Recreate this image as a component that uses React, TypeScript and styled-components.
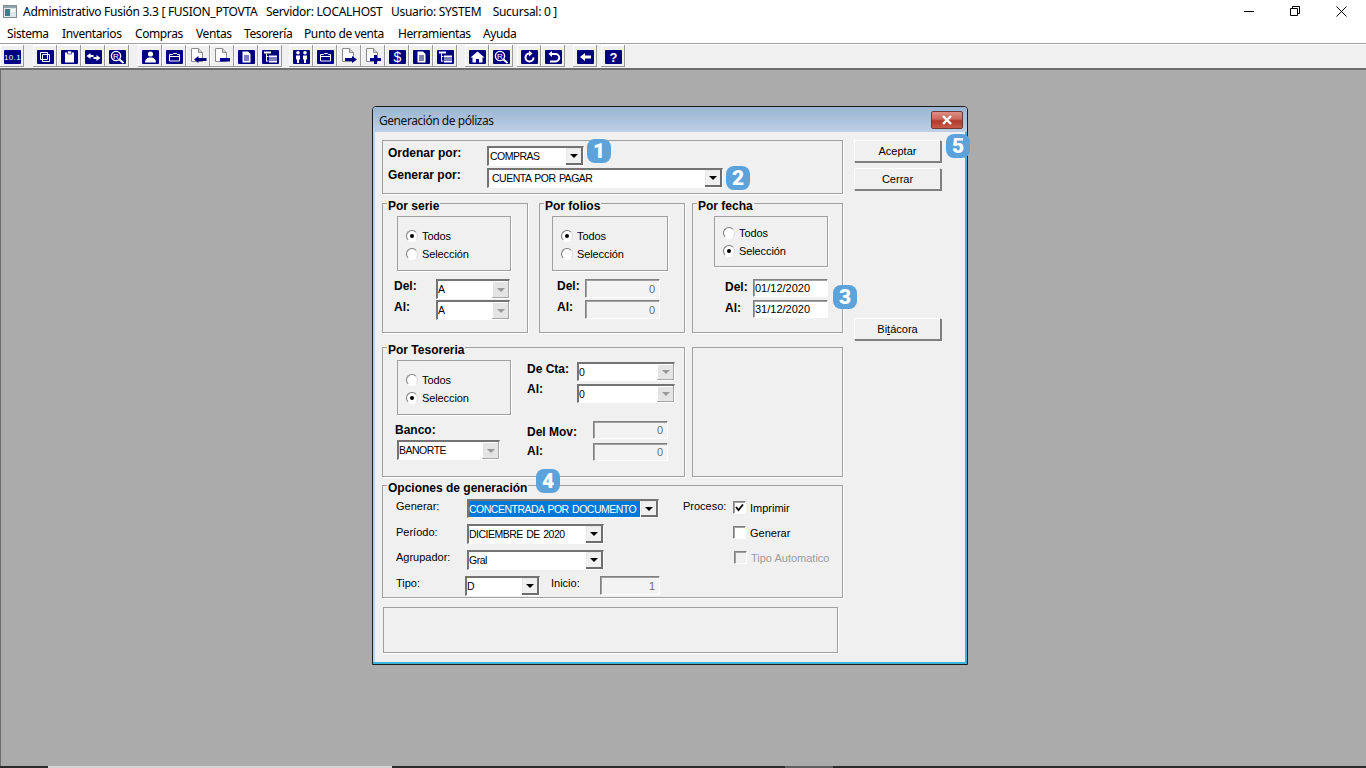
import React from 'react';
import styled, { createGlobalStyle } from 'styled-components';

const GlobalStyle = createGlobalStyle`
  html, body {
    margin: 0;
    height: 100%;
    overflow: hidden;
  }
  body {
    font-family: "Liberation Sans", Arial, sans-serif;
    font-size: 11px;
    color: #000;
  }
  #root {
    height: 100%;
  }
`;

const Screen = styled.div`
  display: flex;
  flex-direction: column;
  height: 768px;
  background: #fff;
`;

const TitleBar = styled.div`
  display: flex;
  align-items: center;
  height: 22px;
  padding-left: 3px;
  font-family: "Noto Sans", sans-serif;
  font-size: 12px;
  color: #000;
`;

const TitleText = styled.span`
  margin-left: 6px;
  white-space: pre;
  letter-spacing: -0.28px;
`;

const WindowControls = styled.div`
  display: flex;
  margin-left: auto;
  margin-right: 2px;
`;

const WindowButton = styled.div`
  display: flex;
  align-items: center;
  justify-content: center;
  width: 46px;
  height: 20px;
`;

const MenuBar = styled.div`
  display: flex;
  align-items: center;
  height: 22px;
  padding: 2px 0 0 7px;
  box-sizing: border-box;
  border-bottom: 1px solid #a0a0a0;
  font-family: "Noto Sans", sans-serif;
  font-size: 12px;
  letter-spacing: -0.4px;
`;

const MenuItem = styled.span<{ $w: number }>`
  width: ${p => p.$w}px;
`;

const Toolbar = styled.div`
  display: flex;
  height: 26px;
  box-sizing: border-box;
  background: #f0f0f0;
  border-top: 1px solid #fff;
  border-bottom: 2px solid #6d6d6d;
`;

const ToolGroup = styled.div<{ $gap: number }>`
  display: flex;
  margin-left: ${p => p.$gap}px;
`;

const ToolButton = styled.div`
  display: flex;
  justify-content: center;
  align-items: flex-end;
  width: 24px;
  height: 22px;
  padding-bottom: 3px;
  box-sizing: border-box;
  box-shadow: inset -1px -1px 0 #9a9a9a, inset 1px 1px 0 #fff;
`;

const Desktop = styled.div`
  flex: 1;
  padding: 36px 0 0 371px;
  background: #ababab;
  border-left: 1px solid #6d6d6d;
  box-sizing: border-box;
`;

const TaskStrip = styled.div`
  display: flex;
  height: 2px;
  background: #2b2b2b;
`;

const TaskItem = styled.div<{ $left: number; $w: number; $c: string }>`
  margin-left: ${p => p.$left}px;
  width: ${p => p.$w}px;
  background: ${p => p.$c};
`;

const Dialog = styled.div`
  position: relative;
  display: flex;
  flex-direction: column;
  width: 596px;
  height: 559px;
  box-sizing: border-box;
  border: 1px solid #1c1c1c;
  border-radius: 4px 4px 0 0;
  background: #b9d1ea;
  box-shadow: inset -2px -2px 0 #3cb4dc;
`;

const DialogTitle = styled.div`
  display: flex;
  align-items: center;
  justify-content: space-between;
  height: 25px;
  flex: none;
  padding: 0 4px 0 6px;
  background: linear-gradient(#99b4d1, #bfd0e6);
  border-radius: 3px 3px 0 0;
  font-family: "Noto Sans", sans-serif;
  font-size: 12px;
  letter-spacing: -0.45px;
  color: #111;
`;

const DialogCaption = styled.span`
  padding-top: 2px;
`;

const CloseBox = styled.div`
  display: flex;
  align-items: center;
  justify-content: center;
  width: 32px;
  height: 18px;
  box-sizing: border-box;
  border: 1px solid #6e3a36;
  border-radius: 2px;
  background: linear-gradient(#dc8f82 0%, #c9675a 45%, #b13a2a 55%, #c65a48 100%);
`;

const DialogBody = styled.div`
  display: flex;
  gap: 11px;
  flex: 1;
  margin: 0 2px 2px;
  padding: 8px 0 0 7px;
  background: #f0f0f0;
`;

const LeftColumn = styled.div`
  display: flex;
  flex-direction: column;
  width: 461px;
`;

const RightColumn = styled.div`
  display: flex;
  flex-direction: column;
  gap: 6px;
  width: 88px;
`;

const ActionButton = styled.div<{ $top?: number }>`
  display: flex;
  align-items: center;
  justify-content: center;
  height: 22px;
  width: 87px;
  box-sizing: border-box;
  margin-top: ${p => p.$top ?? 0}px;
  background: #f0f0f0;
  border: 1px solid;
  border-color: #fff #808080 #808080 #fff;
  box-shadow: 1px 1px 0 #808080;
`;

const Panel = styled.div<{ $w?: number; $h: number; $mt?: number; $ml?: number }>`
  position: relative;
  width: ${p => (p.$w ? `${p.$w}px` : 'auto')};
  height: ${p => p.$h}px;
  margin-top: ${p => p.$mt ?? 0}px;
  margin-left: ${p => p.$ml ?? 0}px;
  box-sizing: border-box;
  flex: none;
  border: 1px solid #a0a0a0;
  box-shadow: 1px 1px 0 #fff;
`;

const TopPanel = styled(Panel)`
  display: flex;
  flex-direction: column;
  gap: 2px;
  padding: 5px 0 0 5px;
`;

const GroupRow = styled.div<{ $mt: number }>`
  display: flex;
  gap: 7px;
  margin-top: ${p => p.$mt}px;
`;

const Group = styled(Panel)<{ $pl?: number }>`
  display: flex;
  flex-direction: column;
  padding: 12px 0 0 ${p => p.$pl ?? 14}px;
`;

const Legend = styled.span`
  position: absolute;
  top: -5px;
  left: 4px;
  padding: 0 1px;
  background: #f0f0f0;
  font-size: 12px;
  font-weight: bold;
  line-height: 14px;
  white-space: nowrap;
`;

const RadioBox = styled.div<{ $w: number; $h: number; $top: number; $ml?: number }>`
  display: flex;
  flex-direction: column;
  width: ${p => p.$w}px;
  height: ${p => p.$h}px;
  margin-left: ${p => p.$ml ?? 0}px;
  padding: ${p => p.$top}px 0 0 8px;
  box-sizing: border-box;
  flex: none;
  border: 1px solid #a0a0a0;
  box-shadow: 1px 1px 0 #fff;
`;

const RadioRow = styled.div`
  display: flex;
  align-items: center;
  gap: 4px;
  height: 18px;
  letter-spacing: -0.1px;
`;

const RadioDot = styled.span<{ $on?: boolean }>`
  display: flex;
  align-items: center;
  justify-content: center;
  width: 12px;
  height: 12px;
  box-sizing: border-box;
  border-radius: 50%;
  border: 1px solid;
  border-color: #7a7a7a #dcdcdc #fff #7a7a7a;
  background: #fff;

  &::after {
    content: '';
    width: 4px;
    height: 4px;
    border-radius: 50%;
    background: ${p => (p.$on ? '#000' : 'transparent')};
  }
`;

const Fields = styled.div<{ $mt?: number; $ml?: number; $gap?: number }>`
  display: flex;
  flex-direction: column;
  gap: ${p => p.$gap ?? 1}px;
  margin-top: ${p => p.$mt ?? 0}px;
  margin-left: ${p => p.$ml ?? 0}px;
`;

const FieldRow = styled.div<{ $mt?: number }>`
  display: flex;
  align-items: flex-start;
  margin-top: ${p => p.$mt ?? 0}px;
`;

const BoldLabel = styled.span<{ $w: number; $top?: number; $ml?: number }>`
  width: ${p => p.$w}px;
  flex: none;
  margin-top: ${p => p.$top ?? 0}px;
  margin-left: ${p => p.$ml ?? 0}px;
  font-size: 12px;
  font-weight: bold;
  line-height: 14px;
  white-space: nowrap;
`;

const PlainLabel = styled.span<{ $w: number; $ml?: number; $top?: number }>`
  width: ${p => p.$w}px;
  flex: none;
  margin-left: ${p => p.$ml ?? 0}px;
  margin-top: ${p => p.$top ?? 0}px;
  line-height: 14px;
  white-space: nowrap;
`;

const Combo = styled.div<{ $w: number; $h?: number }>`
  display: flex;
  width: ${p => p.$w}px;
  height: ${p => p.$h ?? 20}px;
  flex: none;
  box-sizing: border-box;
  background: #fff;
  border: solid;
  border-width: 2px 1px 1px 2px;
  border-color: #747474 #fff #fff #747474;
`;

const ComboText = styled.span<{ $pad?: number; $selected?: boolean }>`
  flex: 1;
  display: flex;
  align-items: center;
  padding-left: ${p => p.$pad ?? 0}px;
  padding-bottom: 1px;
  white-space: pre;
  font-size: 10.5px;
  letter-spacing: -0.5px;
  word-spacing: 1px;
  background: ${p => (p.$selected ? '#0078d7' : 'transparent')};
  color: ${p => (p.$selected ? '#fff' : '#000')};
  margin-right: ${p => (p.$selected ? 1 : 0)}px;
`;

const ComboArrow = styled.span<{ $off?: boolean }>`
  display: flex;
  align-items: center;
  justify-content: center;
  width: 17px;
  flex: none;
  background: ${p => (p.$off ? '#e4e4e4' : '#f0f0f0')};
  box-shadow: ${p =>
    p.$off
      ? 'inset -1px -1px 0 #a6a6a6, inset 1px 1px 0 #fff'
      : 'inset -2px -2px 0 #6e6e6e, inset 1px 1px 0 #e8e8e8'};

  &::after {
    content: '';
    border-style: solid;
    border-width: 4px 4px 0;
    border-color: ${p => (p.$off ? '#9a9a9a' : '#000')} transparent transparent;
    margin: 0 ${p => (p.$off ? 0 : 1)}px ${p => (p.$off ? 0 : 1)}px 0;
  }
`;

const TextBox = styled.div<{ $w: number; $h?: number; $off?: boolean }>`
  display: flex;
  align-items: center;
  justify-content: ${p => (p.$off ? 'flex-end' : 'flex-start')};
  width: ${p => p.$w}px;
  height: ${p => p.$h ?? 19}px;
  flex: none;
  box-sizing: border-box;
  padding: 0 4px 0 1px;
  background: ${p => (p.$off ? '#f3f3f3' : '#fff')};
  color: ${p => (p.$off ? '#6d6d6d' : '#000')};
  border: 1px solid;
  border-color: #808080 #fff #fff #808080;
  box-shadow: inset 1px 1px 0 #a0a0a0;
`;

const Columns = styled.div<{ $gap: number }>`
  display: flex;
  gap: ${p => p.$gap}px;
`;

const OptionsGroup = styled(Panel)`
  display: flex;
  padding: 13px 0 0 13px;
`;

const CheckColumn = styled.div`
  display: flex;
  flex-direction: column;
  margin: -4px 0 0 23px;
`;

const CheckRow = styled.div<{ $off?: boolean }>`
  display: flex;
  align-items: center;
  gap: 4px;
  height: 25px;
  padding-left: ${p => (p.$off ? 1 : 0)}px;
  color: ${p => (p.$off ? '#9c9c9c' : '#000')};
`;

const CheckBox = styled.span<{ $off?: boolean }>`
  display: flex;
  align-items: center;
  justify-content: center;
  width: 13px;
  height: 13px;
  box-sizing: border-box;
  background: ${p => (p.$off ? '#f0f0f0' : '#fff')};
  border: 1px solid;
  border-color: #808080 #fff #fff #808080;
  box-shadow: inset 1px 1px 0 #a0a0a0;
`;

const Badge = styled.span<{ $x: number; $y: number }>`
  position: absolute;
  left: ${p => p.$x}px;
  top: ${p => p.$y}px;
  display: flex;
  align-items: center;
  justify-content: center;
  width: 24px;
  height: 24px;
  border-radius: 8px;
  background: #5ba3da;
  color: #fff;
  font-family: "Roboto", sans-serif;
  font-size: 21px;
  font-weight: 900;
  line-height: 1;
`;

const navy = '#000080';

const NavyIcon = ({ children }: { children: React.ReactNode }) => (
  <svg width="17" height="14" viewBox="0 0 17 14">
    <rect width="17" height="14" rx="1" fill={navy} />
    {children}
  </svg>
);

// white page with a folded corner, the arrow or sign is drawn over it
const DocIcon = ({ children }: { children: React.ReactNode }) => (
  <svg width="17" height="16" viewBox="0 0 17 16">
    <path d="M1.5 0.5h7l4 4v9h-11z" fill="#fff" stroke="#8c8c8c" />
    <path d="M8.5 0.5v4h4" fill="#d0d0d0" stroke="#8c8c8c" />
    {children}
  </svg>
);

const magnifier = (
  <NavyIcon>
    <circle cx="7" cy="6" r="4.6" fill={navy} stroke="#fff" strokeWidth="1.4" />
    <text x="7" y="9" fontSize="8" fontFamily="Liberation Sans" fill="#fff" textAnchor="middle">R</text>
    <path d="M10.5 9.5l4 3.5" stroke="#fff" strokeWidth="2" />
  </NavyIcon>
);

const pageLines = (
  <NavyIcon>
    <path d="M4.5 1.5h5.5l2.5 2.5v8.5h-8z" fill="#fff" />
    <path d="M6 6h5M6 8h5M6 10h5" stroke={navy} strokeWidth="1" />
  </NavyIcon>
);

const treeList = (
  <NavyIcon>
    <path d="M2 1.5h7v2H2z" fill="#fff" />
    <path d="M4.5 3.5v8M4.5 6.5h2M4.5 11h2" stroke="#fff" strokeWidth="1" />
    <path d="M7 5.5h8v2H7zM7 8.5h8v1H7zM7 10.5h8v2H7z" fill="#fff" />
  </NavyIcon>
);

const folder = (
  <NavyIcon>
    <path d="M3.5 11V4.5h3l1-1h3l1 1h2V11z" fill="none" stroke="#fff" strokeWidth="1" />
    <path d="M3.5 6.5h10" stroke="#fff" strokeWidth="1" />
  </NavyIcon>
);

const icons: Record<string, React.ReactNode> = {
  number: (
    <NavyIcon>
      <text x="8.5" y="10" fontSize="8" fontFamily="Liberation Sans" fill="#fff" textAnchor="middle" letterSpacing="0.4">10.1</text>
    </NavyIcon>
  ),
  copy: (
    <NavyIcon>
      <path d="M3.5 2.5h7v2h2v7h-7v-2h-2z" fill="none" stroke="#fff" strokeWidth="1" />
      <path d="M5.5 4.5h5v5h-5z" fill="none" stroke="#fff" strokeWidth="1" />
    </NavyIcon>
  ),
  clipboard: (
    <NavyIcon>
      <path d="M4 2.5h9v10H4z" fill="#fff" />
      <path d="M6.5 1h4v3h-4z" fill="#fff" stroke={navy} strokeWidth="0.6" />
    </NavyIcon>
  ),
  swap: (
    <NavyIcon>
      <path d="M1.5 6l4-3v2h3v2h-3v2z" fill="#fff" />
      <path d="M15.5 8l-4-3v2h-3v2h3v2z" fill="#fff" />
    </NavyIcon>
  ),
  search: magnifier,
  person: (
    <NavyIcon>
      <circle cx="8.5" cy="4" r="2.6" fill="#fff" />
      <path d="M3 12.5c0-3 2-5 5.5-5s5.5 2 5.5 5z" fill="#fff" />
    </NavyIcon>
  ),
  folder,
  docIn: (
    <DocIcon>
      <path d="M4 11.5l4.5-3.5v2h8v3h-8v2z" fill={navy} />
    </DocIcon>
  ),
  docOut: (
    <DocIcon>
      <path d="M6 10h10v3.5H6z" fill={navy} />
    </DocIcon>
  ),
  page: pageLines,
  tree: treeList,
  people: (
    <NavyIcon>
      <circle cx="5" cy="2.8" r="1.8" fill="#fff" />
      <path d="M3 5.5h4v4H6V13H4V9.500H3z" fill="#fff" />
      <circle cx="12" cy="2.8" r="1.8" fill="#fff" />
      <path d="M10 5.5h4v4h-1V13h-2V9.500h-1z" fill="#fff" />
    </NavyIcon>
  ),
  docRight: (
    <DocIcon>
      <path d="M4 10h7V8l5 3.5-5 3.5v-2H4z" fill={navy} />
    </DocIcon>
  ),
  docPlus: (
    <DocIcon>
      <path d="M9 7h3v3h4v3h-4v3H9v-3H5v-3h4z" fill={navy} />
    </DocIcon>
  ),
  dollar: (
    <NavyIcon>
      <text x="8.5" y="12.3" fontSize="14" fontFamily="Liberation Sans" fill="#fff" textAnchor="middle">$</text>
    </NavyIcon>
  ),
  home: (
    <NavyIcon>
      <path d="M8.5 1.5l7 6h-2v5H10V9H7v3.5H3.5v-5h-2z" fill="#fff" />
    </NavyIcon>
  ),
  redo: (
    <NavyIcon>
      <path d="M8.5 3.5A4 4 0 1 0 12.5 7.5" fill="none" stroke="#fff" strokeWidth="2" />
      <path d="M8 0.5v6l3.5-3z" fill="#fff" />
    </NavyIcon>
  ),
  undo: (
    <NavyIcon>
      <path d="M5.5 4h5a2.8 2.8 0 0 1 0 7.5H5" fill="none" stroke="#fff" strokeWidth="2" />
      <path d="M7 1v6L3.5 4z" fill="#fff" />
    </NavyIcon>
  ),
  back: (
    <NavyIcon>
      <path d="M3 7l5-4v2.500h6v3H8V11z" fill="#fff" />
    </NavyIcon>
  ),
  help: (
    <NavyIcon>
      <text x="8.5" y="11.8" fontSize="13" fontWeight="bold" fontFamily="Liberation Sans" fill="#fff" textAnchor="middle">?</text>
    </NavyIcon>
  ),
};

const toolGroups = [
  { gap: 0, items: ['number'] },
  { gap: 9, items: ['copy', 'clipboard', 'swap', 'search'] },
  { gap: 9, items: ['person', 'folder', 'docIn', 'docOut', 'page', 'tree'] },
  { gap: 7, items: ['people', 'folder', 'docRight', 'docPlus', 'dollar', 'page', 'tree'] },
  { gap: 8, items: ['home', 'search'] },
  { gap: 4, items: ['redo', 'undo'] },
  { gap: 8, items: ['back'] },
  { gap: 4, items: ['help'] },
];

const menus: [string, number][] = [
  ['Sistema', 55],
  ['Inventarios', 73],
  ['Compras', 61],
  ['Ventas', 48],
  ['Tesorería', 60],
  ['Punto de venta', 94],
  ['Herramientas', 85],
  ['Ayuda', 50],
];

const Radio = ({ label, on }: { label: string; on?: boolean }) => (
  <RadioRow>
    <RadioDot $on={on} />
    {label}
  </RadioRow>
);

const Select = ({
  w,
  h,
  text,
  pad,
  off,
  selected,
}: {
  w: number;
  h?: number;
  text: string;
  pad?: number;
  off?: boolean;
  selected?: boolean;
}) => (
  <Combo $w={w} $h={h}>
    <ComboText $pad={pad} $selected={selected}>{text}</ComboText>
    <ComboArrow $off={off} />
  </Combo>
);

export default function App() {
  return (
    <>
      <GlobalStyle />
      <Screen>
        <TitleBar>
          <svg width="14" height="13" viewBox="0 0 14 13">
            <rect x="0.5" y="0.5" width="13" height="12" fill="#dfe6e6" stroke="#7f8f8f" />
            <rect x="1" y="1" width="12" height="2" fill="#8fa3a8" />
            <rect x="2" y="4" width="5" height="7" fill="#3f7f88" />
            <rect x="8" y="4" width="4" height="3" fill="#ffffff" />
          </svg>
          <TitleText>{'Administrativo Fusión 3.3 [ FUSION_PTOVTA   Servidor: LOCALHOST   Usuario: SYSTEM    Sucursal: 0 ]'}</TitleText>
          <WindowControls>
            <WindowButton>
              <svg width="10" height="10" viewBox="0 0 10 10">
                <path d="M0 5.5h10" stroke="#000" strokeWidth="1" />
              </svg>
            </WindowButton>
            <WindowButton>
              <svg width="10" height="10" viewBox="0 0 10 10">
                <path d="M0.5 2.5h7v7h-7zM2.5 2.5V0.5h7v7H7.5" fill="none" stroke="#000" strokeWidth="1" />
              </svg>
            </WindowButton>
            <WindowButton>
              <svg width="11" height="11" viewBox="0 0 11 11">
                <path d="M0.5 0.5l10 10M10.5 0.5l-10 10" stroke="#000" strokeWidth="1" />
              </svg>
            </WindowButton>
          </WindowControls>
        </TitleBar>
        <MenuBar>
          {menus.map(([label, w]) => (
            <MenuItem key={label} $w={w}>{label}</MenuItem>
          ))}
        </MenuBar>
        <Toolbar>
          {toolGroups.map((group, i) => (
            <ToolGroup key={i} $gap={group.gap}>
              {group.items.map((name, j) => (
                <ToolButton key={j}>{icons[name]}</ToolButton>
              ))}
            </ToolGroup>
          ))}
        </Toolbar>
        <Desktop>
          <Dialog>
            <DialogTitle>
              <DialogCaption>Generación de pólizas</DialogCaption>
              <CloseBox>
                <svg width="12" height="10" viewBox="0 0 12 10">
                  <path d="M2 1l8 8M10 1l-8 8" stroke="#fff" strokeWidth="2.4" />
                </svg>
              </CloseBox>
            </DialogTitle>
            <DialogBody>
              <LeftColumn>
                <TopPanel $h={54}>
                  <FieldRow>
                    <BoldLabel $w={99}>Ordenar por:</BoldLabel>
                    <Select w={97} text="COMPRAS" pad={1} />
                  </FieldRow>
                  <FieldRow>
                    <BoldLabel $w={99}>Generar por:</BoldLabel>
                    <Select w={236} text="CUENTA POR PAGAR" pad={3} />
                  </FieldRow>
                </TopPanel>

                <GroupRow $mt={9}>
                  <Group $w={146} $h={130}>
                    <Legend>Por serie</Legend>
                    <RadioBox $w={114} $h={55} $top={10}>
                      <Radio label="Todos" on />
                      <Radio label="Selección" />
                    </RadioBox>
                    <Fields $mt={8} $ml={-3}>
                      <FieldRow>
                        <BoldLabel $w={42}>Del:</BoldLabel>
                        <Select w={74} text="A" off />
                      </FieldRow>
                      <FieldRow>
                        <BoldLabel $w={42}>Al:</BoldLabel>
                        <Select w={74} text="A" off />
                      </FieldRow>
                    </Fields>
                  </Group>
                  <Group $w={146} $h={130} $ml={4} $pl={12}>
                    <Legend>Por folios</Legend>
                    <RadioBox $w={116} $h={55} $top={10}>
                      <Radio label="Todos" on />
                      <Radio label="Selección" />
                    </RadioBox>
                    <Fields $mt={8} $ml={5} $gap={2}>
                      <FieldRow>
                        <BoldLabel $w={28}>Del:</BoldLabel>
                        <TextBox $w={75} $off>0</TextBox>
                      </FieldRow>
                      <FieldRow>
                        <BoldLabel $w={28}>Al:</BoldLabel>
                        <TextBox $w={75} $off>0</TextBox>
                      </FieldRow>
                    </Fields>
                  </Group>
                  <Group $w={151} $h={130}>
                    <Legend>Por fecha</Legend>
                    <RadioBox $w={114} $h={51} $top={7} $ml={7}>
                      <Radio label="Todos" />
                      <Radio label="Selección" on />
                    </RadioBox>
                    <Fields $mt={12} $ml={18} $gap={3}>
                      <FieldRow>
                        <BoldLabel $w={28} $top={1}>Del:</BoldLabel>
                        <TextBox $w={75} $h={18}>01/12/2020</TextBox>
                      </FieldRow>
                      <FieldRow>
                        <BoldLabel $w={28} $top={1}>Al:</BoldLabel>
                        <TextBox $w={75} $h={18}>31/12/2020</TextBox>
                      </FieldRow>
                    </Fields>
                  </Group>
                </GroupRow>

                <GroupRow $mt={14}>
                  <Group $w={303} $h={130}>
                    <Legend>Por Tesoreria</Legend>
                    <Columns $gap={16}>
                      <div>
                        <RadioBox $w={114} $h={55} $top={10}>
                          <Radio label="Todos" />
                          <Radio label="Seleccion" on />
                        </RadioBox>
                        <Fields $mt={8} $gap={3}>
                          <BoldLabel $w={60} $ml={-2}>Banco:</BoldLabel>
                          <Select w={103} text="BANORTE" off />
                        </Fields>
                      </div>
                      <Fields $mt={2} $gap={3}>
                        <FieldRow>
                          <BoldLabel $w={50}>De Cta:</BoldLabel>
                          <Select w={98} h={19} text="0" off />
                        </FieldRow>
                        <FieldRow>
                          <BoldLabel $w={50} $top={-2}>Al:</BoldLabel>
                          <Select w={98} h={19} text="0" off />
                        </FieldRow>
                        <FieldRow $mt={15}>
                          <BoldLabel $w={66} $top={4}>Del Mov:</BoldLabel>
                          <TextBox $w={75} $h={18} $off>0</TextBox>
                        </FieldRow>
                        <FieldRow $mt={1}>
                          <BoldLabel $w={66} $top={1}>Al:</BoldLabel>
                          <TextBox $w={75} $h={18} $off>0</TextBox>
                        </FieldRow>
                      </Fields>
                    </Columns>
                  </Group>
                  <Group $w={151} $h={130} />
                </GroupRow>

                <OptionsGroup $h={113} $mt={8}>
                  <Legend>Opciones de generación</Legend>
                  <Fields $gap={6}>
                    <FieldRow>
                      <PlainLabel $w={71}>Generar:</PlainLabel>
                      <Select w={192} h={19} text="CONCENTRADA POR DOCUMENTO" selected />
                    </FieldRow>
                    <FieldRow>
                      <PlainLabel $w={71} $top={1}>Período:</PlainLabel>
                      <Select w={137} text="DICIEMBRE DE 2020" />
                    </FieldRow>
                    <FieldRow>
                      <PlainLabel $w={71}>Agrupador:</PlainLabel>
                      <Select w={137} text="Gral" />
                    </FieldRow>
                    <FieldRow>
                      <PlainLabel $w={69}>Tipo:</PlainLabel>
                      <Select w={75} text="D" />
                      <PlainLabel $w={49} $ml={11}>Inicio:</PlainLabel>
                      <TextBox $w={60} $off>1</TextBox>
                    </FieldRow>
                  </Fields>
                  <CheckColumn>
                    <FieldRow>
                      <PlainLabel $w={50} $top={4}>Proceso:</PlainLabel>
                      <CheckRow>
                        <CheckBox>
                          <svg width="9" height="9" viewBox="0 0 9 9">
                            <path d="M1 4l2.5 3L8 1.5" fill="none" stroke="#000" strokeWidth="1.8" />
                          </svg>
                        </CheckBox>
                        Imprimir
                      </CheckRow>
                    </FieldRow>
                    <FieldRow>
                      <PlainLabel $w={50} />
                      <CheckRow>
                        <CheckBox />
                        Generar
                      </CheckRow>
                    </FieldRow>
                    <FieldRow>
                      <PlainLabel $w={50} />
                      <CheckRow $off>
                        <CheckBox $off />
                        Tipo Automatico
                      </CheckRow>
                    </FieldRow>
                  </CheckColumn>
                </OptionsGroup>

                <Panel $w={455} $h={46} $mt={9} $ml={1} />
              </LeftColumn>

              <RightColumn>
                <ActionButton>Aceptar</ActionButton>
                <ActionButton>Cerrar</ActionButton>
                <ActionButton $top={122}>
                  <span>Bi<u>t</u>ácora</span>
                </ActionButton>
              </RightColumn>
            </DialogBody>
            <Badge $x={214} $y={32}>1</Badge>
            <Badge $x={353} $y={59}>2</Badge>
            <Badge $x={460} $y={178}>3</Badge>
            <Badge $x={163} $y={362}>4</Badge>
            <Badge $x={573} $y={27}>5</Badge>
          </Dialog>
        </Desktop>
        <TaskStrip>
          <TaskItem $left={48} $w={344} $c="#d4d4d4" />
          <TaskItem $left={393} $w={48} $c="#5f5f5f" />
        </TaskStrip>
      </Screen>
    </>
  );
}
